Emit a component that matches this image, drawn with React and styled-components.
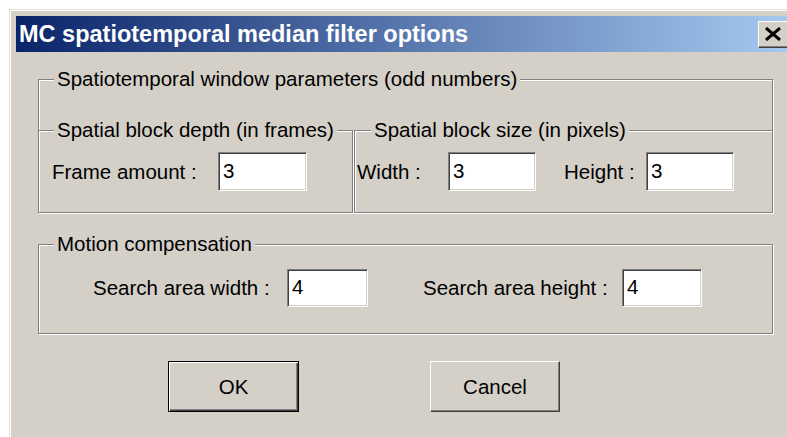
import React from 'react';
import styled, { createGlobalStyle } from 'styled-components';

const GlobalStyle = createGlobalStyle`
  html, body {
    margin: 0;
    padding: 0;
    background: #fff;
    overflow: hidden;
  }
  body {
    font-family: "Liberation Sans", Arial, sans-serif;
    color: #000;
  }
`;

const Window = styled.div`
  margin: 9px 0 0 9px;
  width: 784px;
  height: 440px;
  box-sizing: border-box;
  background: #d4d0c8;
  border-left: 1px solid #e2dfd8;
  border-top: 1px solid #e2dfd8;
  box-shadow: inset 1px 1px 0 #fff;
  padding: 6px 0 0 6px;
`;

const TitleBar = styled.div`
  height: 36px;
  display: flex;
  align-items: center;
  justify-content: space-between;
  padding: 0 3px;
  background: linear-gradient(to right, #0a246a, #a6caf0);
`;

const Title = styled.span`
  color: #fff;
  font-weight: bold;
  font-size: 23.5px;
`;

const CloseButton = styled.button`
  width: 32px;
  height: 27px;
  padding: 0 0 0 5px;
  display: flex;
  align-items: center;
  justify-content: flex-start;
  background: #d4d0c8;
  border: 1px solid;
  border-color: #fff #404040 #404040 #fff;
  box-shadow: inset -1px -1px 0 #808080;
`;

const Body = styled.div`
  padding: 15px 0 0 22px;
`;

const Group = styled.fieldset`
  margin: ${p => p.$margin || '0'};
  padding: ${p => p.$pad || '0'};
  width: ${p => p.$w}px;
  box-sizing: border-box;
  min-width: 0;
  border: 1px solid #808080;
  box-shadow: inset 1px 1px 0 #fff, 1px 1px 0 #fff;
`;

// legend offset is measured from the content box, so groups with
// left padding pass a smaller (or negative) offset
const Legend = styled.legend`
  margin-left: ${p => (p.$ml ?? 15)}px;
  padding: 0 3px;
  background: #d4d0c8;
  font-size: 20.5px;
  line-height: 24px;
`;

const Row = styled.div`
  display: flex;
  align-items: ${p => p.$align || 'center'};
  margin-top: ${p => p.$top || 0}px;
`;

const Label = styled.label`
  width: ${p => p.$w}px;
  margin-left: ${p => p.$ml || 0}px;
  font-size: 20.5px;
  white-space: nowrap;
  flex: none;
`;

const Field = styled.input`
  width: ${p => p.$w}px;
  height: ${p => p.$h || 39}px;
  box-sizing: border-box;
  flex: none;
  margin: 0;
  padding: 0 0 2px 4px;
  font-family: inherit;
  font-size: 20.5px;
  color: #000;
  background: #fff;
  border: 1px solid;
  border-color: #808080 #fff #fff #808080;
  box-shadow: inset 1px 1px 0 #404040, inset -1px -1px 0 #d4d0c8;
  outline: none;
`;

const Buttons = styled.div`
  display: flex;
  gap: 131px;
  margin-top: 27px;
  padding-left: 130px;
`;

const Button = styled.button`
  width: ${p => p.$w}px;
  height: 51px;
  box-sizing: border-box;
  padding: 0;
  font-family: inherit;
  font-size: 20.5px;
  color: #000;
  background: #d4d0c8;
  border: 1px solid;
  border-color: ${p => (p.$default ? '#000' : '#fff #404040 #404040 #fff')};
  box-shadow: ${p =>
    p.$default
      ? 'inset 1px 1px 0 #fff, inset -1px -1px 0 #404040, inset -2px -2px 0 #808080'
      : 'inset -1px -1px 0 #808080'};
`;

const CloseGlyph = () => (
  <svg width="18" height="14" viewBox="0 0 18 14">
    <path d="M2 1 L16 13 M16 1 L2 13" stroke="#000" strokeWidth="3" />
  </svg>
);

export default function App() {
  return (
    <>
      <GlobalStyle />
      <Window>
        <TitleBar>
          <Title>MC spatiotemporal median filter options</Title>
          <CloseButton>
            <CloseGlyph />
          </CloseButton>
        </TitleBar>
        <Body>
          <Group $w={735}>
            <Legend>Spatiotemporal window parameters (odd numbers)</Legend>
            <Row $top={27} $align="stretch">
              <Group $w={315} $margin="0 0 -1px -1px" $pad="10px 0 21px 13px">
                <Legend $ml={2}>Spatial block depth (in frames)</Legend>
                <Row>
                  <Label $w={166}>Frame amount :</Label>
                  <Field $w={89} defaultValue="3" readOnly />
                </Row>
              </Group>
              <Group $w={419} $margin="0 -1px -1px 1px" $pad="10px 0 21px 2px">
                <Legend $ml={14}>Spatial block size (in pixels)</Legend>
                <Row>
                  <Label $w={91}>Width :</Label>
                  <Field $w={88} defaultValue="3" readOnly />
                  <Label $w={82} $ml={28}>Height :</Label>
                  <Field $w={88} defaultValue="3" readOnly />
                </Row>
              </Group>
            </Row>
          </Group>
          <Group $w={735} $margin="19px 0 0 0" $pad="13px 0 26px 54px">
            <Legend $ml={-39}>Motion compensation</Legend>
            <Row>
              <Label $w={194}>Search area width :</Label>
              <Field $w={81} $h={38} defaultValue="4" readOnly />
              <Label $w={199} $ml={55}>Search area height :</Label>
              <Field $w={80} $h={38} defaultValue="4" readOnly />
            </Row>
          </Group>
          <Buttons>
            <Button $w={131} $default>OK</Button>
            <Button $w={130}>Cancel</Button>
          </Buttons>
        </Body>
      </Window>
    </>
  );
}
